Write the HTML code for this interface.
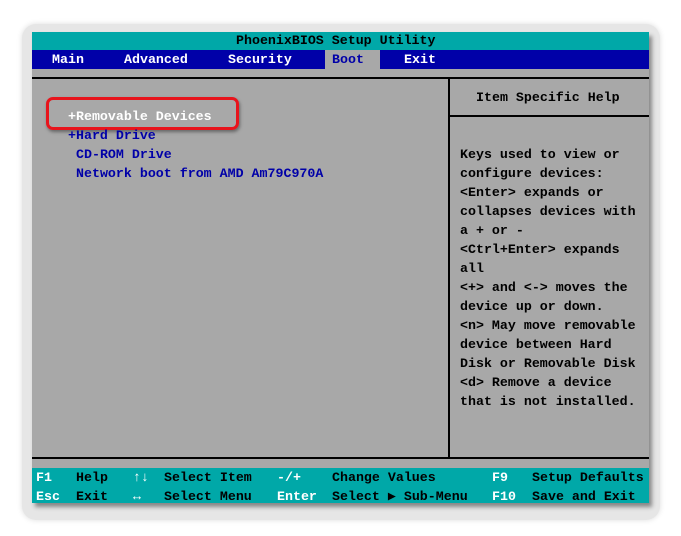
<!DOCTYPE html>
<html><head><meta charset="utf-8"><style>
body{margin:0;width:681px;height:536px;background:#fff;position:relative;overflow:hidden;font-family:"Liberation Mono","DejaVu Sans Mono",monospace;}
.frame{position:absolute;left:22px;top:24px;width:638px;height:496px;border-radius:14px;background:#e6e6e6;box-shadow:0 0 6px #ddd;}
.scr{position:absolute;left:32px;top:32px;width:617px;height:471px;background:#a8a8a8;box-shadow:3px 4px 4px #888;}
.t{position:absolute;font-size:13.3px;line-height:19px;white-space:pre;font-weight:bold;}
.b{color:#0000a8}.w{color:#fff}.k{color:#000}
</style></head><body>
<div class="frame"></div>
<div class="scr"></div>
<div style="position:absolute;left:32px;top:32px;width:617px;height:18px;background:#00a8a8"></div>
<div style="position:absolute;left:32px;top:50px;width:617px;height:19px;background:#0000a8"></div>
<div style="position:absolute;left:325px;top:50px;width:55px;height:19px;background:#a8a8a8"></div>
<div style="position:absolute;left:32px;top:77px;width:617px;height:2px;background:#000"></div>
<div style="position:absolute;left:448px;top:78px;width:2px;height:381px;background:#000"></div>
<div style="position:absolute;left:449px;top:115px;width:200px;height:2px;background:#000"></div>
<div style="position:absolute;left:32px;top:457px;width:617px;height:2px;background:#000"></div>
<div style="position:absolute;left:32px;top:468px;width:617px;height:35px;background:#00a8a8"></div>
<div style="position:absolute;left:46px;top:97px;width:187px;height:27px;border:3px solid #e8141c;border-radius:7px;box-shadow:1px 2px 3px #666"></div>

<div class="t k" style="left:236px;top:31px">PhoenixBIOS Setup Utility</div>
<div class="t w" style="left:52px;top:50px">Main</div>
<div class="t w" style="left:124px;top:50px">Advanced</div>
<div class="t w" style="left:228px;top:50px">Security</div>
<div class="t b" style="left:332px;top:50px">Boot</div>
<div class="t w" style="left:404px;top:50px">Exit</div>

<div class="t w" style="left:68px;top:107px">+Removable Devices</div>
<div class="t b" style="left:68px;top:126px">+Hard Drive</div>
<div class="t b" style="left:76px;top:145px">CD-ROM Drive</div>
<div class="t b" style="left:76px;top:164px">Network boot from AMD Am79C970A</div>

<div class="t k" style="left:476px;top:88px">Item Specific Help</div>
<div class="t k" style="left:460px;top:145px">Keys used to view or
configure devices:
&lt;Enter&gt; expands or
collapses devices with
a + or -
&lt;Ctrl+Enter&gt; expands
all
&lt;+&gt; and &lt;-&gt; moves the
device up or down.
&lt;n&gt; May move removable
device between Hard
Disk or Removable Disk
&lt;d&gt; Remove a device
that is not installed.</div>

<div class="t w" style="left:36px;top:468px">F1
Esc</div>
<div class="t k" style="left:76px;top:468px">Help
Exit</div>
<div class="t w" style="left:133px;top:468px">↑↓
↔</div>
<div class="t k" style="left:164px;top:468px">Select Item
Select Menu</div>
<div class="t w" style="left:277px;top:468px">-/+
Enter</div>
<div class="t k" style="left:332px;top:468px">Change Values
Select ▶ Sub-Menu</div>
<div class="t w" style="left:492px;top:468px">F9
F10</div>
<div class="t k" style="left:532px;top:468px">Setup Defaults
Save and Exit</div>
</body></html>
